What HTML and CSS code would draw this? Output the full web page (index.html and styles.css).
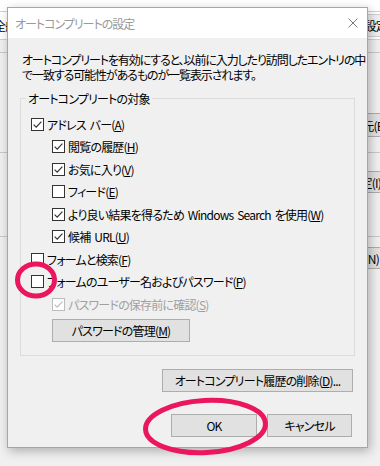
FILE: index.html
```html
<!DOCTYPE html>
<html lang="ja">
<head>
    <meta charset="UTF-8">
    <meta name="viewport" content="width=device-width, initial-scale=1.0">
    <title>オートコンプリートの設定</title>
    <link rel="stylesheet" href="styles.css">
</head>
<body>
    <div class="desktop">
        <!-- Internet Options window behind the dialog -->
        <div class="bg-window">
            <div class="bg-tabs">
                <span class="bg-tab-left">全般</span>
                <span class="bg-tab-right">詳細設定</span>
            </div>
            <div class="bg-body">
                <div class="bg-line line-1"></div>
                <div class="bg-btn btn-1">発行元(B)</div>
                <div class="bg-line line-2"></div>
                <div class="bg-btn btn-2">設定(I)</div>
                <div class="bg-line line-3"></div>
                <div class="bg-btn btn-3">設定(N)</div>
            </div>
        </div>

        <div class="dialog">
            <div class="titlebar">
                <span class="title">オートコンプリートの設定</span>
                <svg class="close" width="10" height="10" viewBox="0 0 10 10">
                    <path d="M0.5 0.5L9.5 9.5M9.5 0.5L0.5 9.5" stroke="#7a7a7a" stroke-width="1" fill="none"/>
                </svg>
            </div>

            <div class="dialog-body">
                <p class="desc">オートコンプリートを有効にすると、以前に入力したり訪問したエントリの中<br>で一致する可能性があるものが一覧表示されます。</p>

                <fieldset class="group">
                    <legend>オートコンプリートの対象</legend>
                    <div class="options">
                        <div class="option">
                            <svg class="cb" viewBox="0 0 13 13"><rect x="0.5" y="0.5" width="12" height="12" fill="#fff" stroke="#333"/><path d="M2.6 6.6L5.2 9.2L10.4 3.6" fill="none" stroke="#333" stroke-width="1.2"/></svg>
                            <span>アドレス バー(<u>A</u>)</span>
                        </div>
                        <div class="option sub">
                            <svg class="cb" viewBox="0 0 13 13"><rect x="0.5" y="0.5" width="12" height="12" fill="#fff" stroke="#333"/><path d="M2.6 6.6L5.2 9.2L10.4 3.6" fill="none" stroke="#333" stroke-width="1.2"/></svg>
                            <span>閲覧の履歴(<u>H</u>)</span>
                        </div>
                        <div class="option sub">
                            <svg class="cb" viewBox="0 0 13 13"><rect x="0.5" y="0.5" width="12" height="12" fill="#fff" stroke="#333"/><path d="M2.6 6.6L5.2 9.2L10.4 3.6" fill="none" stroke="#333" stroke-width="1.2"/></svg>
                            <span>お気に入り(<u>V</u>)</span>
                        </div>
                        <div class="option sub">
                            <svg class="cb" viewBox="0 0 13 13"><rect x="0.5" y="0.5" width="12" height="12" fill="#fff" stroke="#333"/></svg>
                            <span>フィード(<u>E</u>)</span>
                        </div>
                        <div class="option sub">
                            <svg class="cb" viewBox="0 0 13 13"><rect x="0.5" y="0.5" width="12" height="12" fill="#fff" stroke="#333"/><path d="M2.6 6.6L5.2 9.2L10.4 3.6" fill="none" stroke="#333" stroke-width="1.2"/></svg>
                            <span>より良い結果を得るため Windows Search を使用(<u>W</u>)</span>
                        </div>
                        <div class="option sub">
                            <svg class="cb" viewBox="0 0 13 13"><rect x="0.5" y="0.5" width="12" height="12" fill="#fff" stroke="#333"/><path d="M2.6 6.6L5.2 9.2L10.4 3.6" fill="none" stroke="#333" stroke-width="1.2"/></svg>
                            <span>候補 URL(<u>U</u>)</span>
                        </div>
                        <div class="option">
                            <svg class="cb" viewBox="0 0 13 13"><rect x="0.5" y="0.5" width="12" height="12" fill="#fff" stroke="#333"/></svg>
                            <span>フォームと検索(<u>F</u>)</span>
                        </div>
                        <div class="option">
                            <svg class="cb" viewBox="0 0 13 13"><rect x="0.5" y="0.5" width="12" height="12" fill="#fff" stroke="#333"/></svg>
                            <span>フォームのユーザー名およびパスワード(<u>P</u>)</span>
                        </div>
                        <div class="option sub disabled">
                            <svg class="cb" viewBox="0 0 13 13"><rect x="0.5" y="0.5" width="12" height="12" fill="#fff" stroke="#bcbcbc"/><path d="M2.6 6.6L5.2 9.2L10.4 3.6" fill="none" stroke="#bcbcbc" stroke-width="1.2"/></svg>
                            <span>パスワードの保存前に確認(<u>S</u>)</span>
                        </div>
                    </div>
                    <button class="btn btn-manage">パスワードの管理(<u>M</u>)</button>
                </fieldset>

                <div class="history-row">
                    <button class="btn btn-history">オートコンプリート履歴の削除(<u>D</u>)...</button>
                </div>

                <div class="footer">
                    <button class="btn btn-ok">OK</button>
                    <button class="btn btn-cancel">キャンセル</button>
                </div>
            </div>
        </div>

        <!-- red hand-drawn annotations -->
        <svg class="marks" width="380" height="466" viewBox="0 0 380 466">
            <ellipse cx="36" cy="280" rx="18.5" ry="16" fill="none" stroke="#ea1660" stroke-width="5"/>
            <ellipse cx="205.5" cy="426.5" rx="60" ry="26" fill="none" stroke="#ea1660" stroke-width="5" transform="rotate(-3 205.5 426.5)"/>
        </svg>
    </div>
</body>
</html>
```

FILE: styles.css
```css
* {
    box-sizing: border-box;
}

body {
    margin: 0;
    background-color: #fff;
    font-family: "Noto Sans CJK JP", "Noto Sans", sans-serif;
    font-size: 12px;
    font-feature-settings: "palt";
    letter-spacing: -0.8px;
    word-spacing: 2px;
    color: #000;
}

.desktop {
    position: relative;
    width: 380px;
    height: 466px;
    overflow: hidden;
}

/* window behind */
.bg-window {
    margin-top: 11px;
    height: 455px;
    border-top: 1px solid #d0d0d0;
    background-color: #f0f0f0;
}

.bg-tabs {
    height: 28px;
    display: flex;
    justify-content: space-between;
    align-items: center;
    background-color: #fff;
    border-bottom: 1px solid #d0d0d0;
    margin-left: -6px;
    margin-right: -12px;
    white-space: nowrap;
}

.bg-tab-right {
    padding: 2px 4px;
    border: 1px solid #d0d0d0;
    background-color: #f0f0f0;
}

.bg-body {
    display: flex;
    flex-direction: column;
    align-items: flex-end;
}

.bg-line {
    width: 100%;
    height: 1px;
    background-color: #c8c8c8;
}

.line-1 { margin-top: 12px; }
.line-2 { margin-top: 15px; }
.line-3 { margin-top: 43px; }

.bg-btn {
    padding: 0 6px;
    display: flex;
    align-items: center;
    white-space: nowrap;
    background-color: #e1e1e1;
    border: 1px solid #adadad;
}

.btn-1 { margin-top: 60px; height: 24px; margin-right: -14px; }
.btn-2 { margin-top: 18px; height: 22px; margin-right: -8px; }
.btn-3 { margin-top: 10px; height: 22px; margin-right: -6px; }

/* dialog */
.dialog {
    position: absolute;
    left: 7px;
    top: 7px;
    width: 361px;
    height: 441px;
    border: 1px solid #a6a6a6;
    background-color: #f0f0f0;
    box-shadow: 2px 3px 10px rgba(0, 0, 0, 0.28);
    display: flex;
    flex-direction: column;
}

.titlebar {
    height: 30px;
    flex-shrink: 0;
    background-color: #fff;
    display: flex;
    align-items: center;
    justify-content: space-between;
    padding: 0 9px 0 7px;
}

.title {
    color: #999;
    letter-spacing: -1px;
}

.close {
    display: block;
}

.dialog-body {
    padding: 14px 12px 10px;
}

.desc {
    margin: 0 0 0 2px;
    line-height: 15px;
    white-space: nowrap;
    letter-spacing: -1.1px;
}

.group {
    margin: 9px 0 0;
    padding: 0 0 13px 10px;
    border: 1px solid #dcdcdc;
}

.group legend {
    margin-left: -5px;
    padding: 0 2px;
    line-height: 15px;
}

.options {
    margin-top: 7px;
}

.option {
    height: 22.5px;
    display: flex;
    align-items: center;
    gap: 3px;
    white-space: nowrap;
}

.option.sub {
    padding-left: 21px;
}

.option.disabled {
    color: #a0a0a0;
}

.cb {
    width: 13px;
    height: 13px;
    flex-shrink: 0;
}

.btn {
    font-family: inherit;
    font-size: 12px;
    font-feature-settings: "palt";
    letter-spacing: -0.8px;
    word-spacing: 2px;
    color: #000;
    height: 23px;
    padding: 0;
    background-color: #e1e1e1;
    border: 1px solid #adadad;
    border-radius: 0;
    white-space: nowrap;
}

.btn-manage {
    display: block;
    margin: 3.5px 0 0 21px;
    width: 138px;
}

.history-row {
    display: flex;
    justify-content: flex-end;
    margin-top: 13px;
    padding-right: 2px;
}

.btn-history {
    width: 191px;
}

.footer {
    display: flex;
    justify-content: flex-end;
    gap: 10px;
    margin-top: 22px;
    padding-right: 3px;
}

.btn-ok {
    width: 86px;
}

.btn-cancel {
    width: 85px;
}

/* annotations */
.marks {
    position: absolute;
    left: 0;
    top: 0;
    pointer-events: none;
}
```
